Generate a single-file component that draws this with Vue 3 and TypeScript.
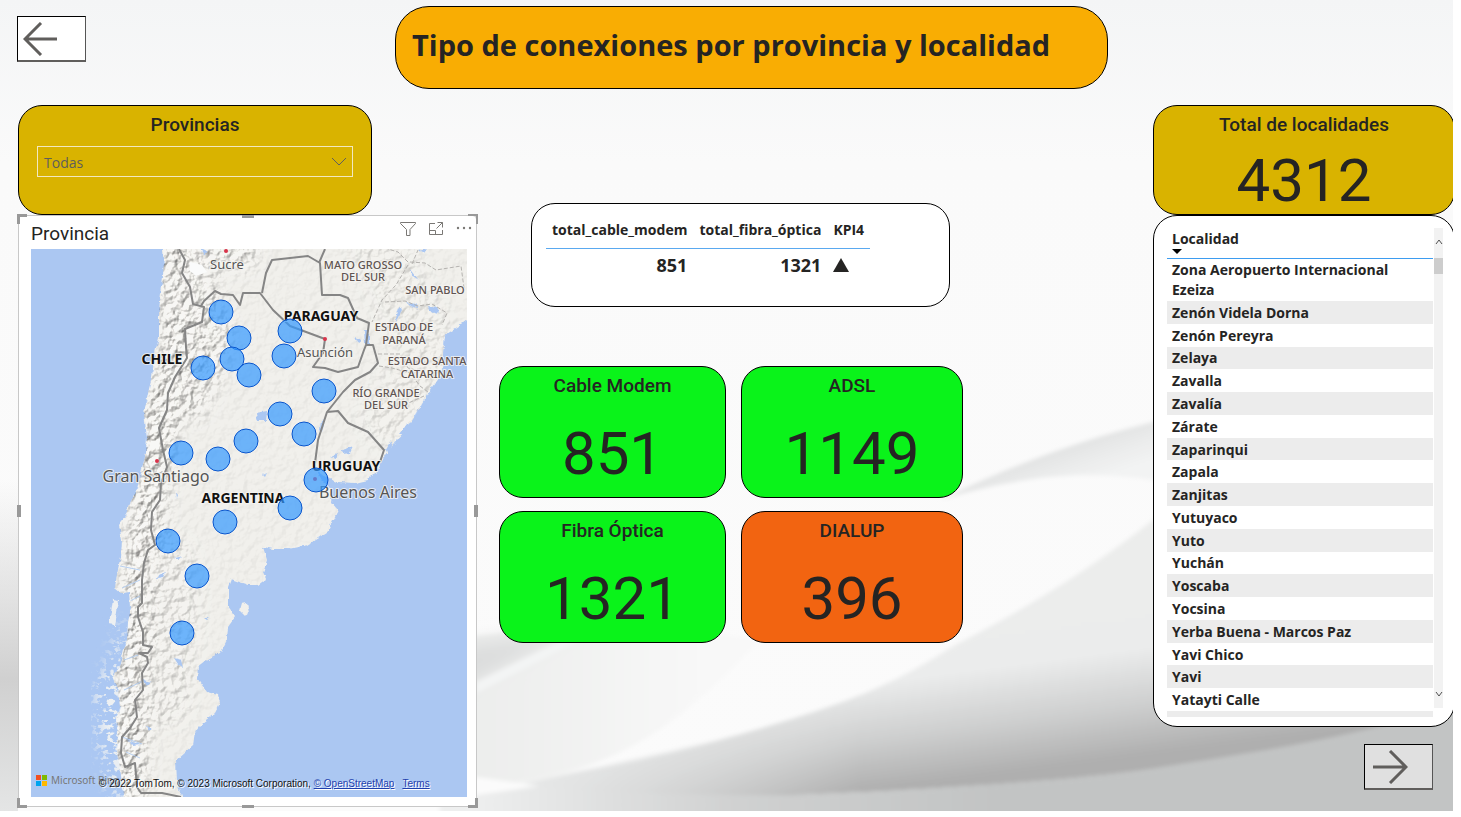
<script setup lang="ts">
import { ref } from 'vue'

interface Kpi { name: string; value: number; tone: 'good' | 'bad' }
interface MapLabel { text: string; x: number; y: number }

const provincia = ref('Todas')

const kpis: Kpi[] = [
  { name: 'Cable Modem', value: 851, tone: 'good' },
  { name: 'ADSL', value: 1149, tone: 'good' },
  { name: 'Fibra Óptica', value: 1321, tone: 'good' },
  { name: 'DIALUP', value: 396, tone: 'bad' },
]

const localidades: string[] = [
  'Zona Aeropuerto Internacional Ezeiza', 'Zenón Videla Dorna', 'Zenón Pereyra', 'Zelaya',
  'Zavalla', 'Zavalía', 'Zárate', 'Zaparinqui', 'Zapala', 'Zanjitas', 'Yutuyaco', 'Yuto',
  'Yuchán', 'Yoscaba', 'Yocsina', 'Yerba Buena - Marcos Paz', 'Yavi Chico', 'Yavi', 'Yatayti Calle',
]

const bubbles: [number, number][] = [
  [221, 312], [239, 338], [290, 331], [232, 359], [284, 356], [203, 368], [249, 375],
  [324, 391], [280, 414], [304, 434], [246, 441], [181, 453], [218, 459], [316, 480],
  [290, 508], [225, 522], [168, 541], [197, 576], [182, 633],
]

const countries: MapLabel[] = [
  { text: 'CHILE', x: 162, y: 364 },
  { text: 'PARAGUAY', x: 321, y: 321 },
  { text: 'URUGUAY', x: 346, y: 471 },
  { text: 'ARGENTINA', x: 243, y: 503 },
]
const states: MapLabel[] = [
  { text: 'MATO GROSSO', x: 363, y: 269 },
  { text: 'DEL SUR', x: 363, y: 281 },
  { text: 'SAN PABLO', x: 435, y: 294 },
  { text: 'ESTADO DE', x: 404, y: 331 },
  { text: 'PARANÁ', x: 404, y: 344 },
  { text: 'ESTADO SANTA', x: 427, y: 365 },
  { text: 'CATARINA', x: 427, y: 378 },
  { text: 'RÍO GRANDE', x: 386, y: 397 },
  { text: 'DEL SUR', x: 386, y: 409 },
]

const handles: string[] = ['tl', 'tr', 'bl', 'br', 't', 'b', 'l', 'r']
</script>

<template>
  <main class="report">
    <svg class="backdrop" viewBox="0 0 1453 811" preserveAspectRatio="none" aria-hidden="true">
      <defs>
        <linearGradient id="bgBase" x1="0" y1="0" x2="0" y2="1">
          <stop offset="0" stop-color="#f4f5f6" />
          <stop offset="0.2" stop-color="#fafafa" />
          <stop offset="1" stop-color="#fbfbfb" />
        </linearGradient>
        <linearGradient id="bgBand" x1="1050" y1="450" x2="1064" y2="490" gradientUnits="userSpaceOnUse">
          <stop offset="0" stop-color="#e1e2e2" />
          <stop offset="0.5" stop-color="#eaebeb" />
          <stop offset="1" stop-color="#f2f3f3" />
        </linearGradient>
        <linearGradient id="bgFold" x1="1140" y1="560" x2="1165" y2="752" gradientUnits="userSpaceOnUse">
          <stop offset="0" stop-color="#ecedec" />
          <stop offset="0.45" stop-color="#ebecec" />
          <stop offset="0.75" stop-color="#cdcece" />
          <stop offset="1" stop-color="#afafaf" />
        </linearGradient>
        <linearGradient id="bgFoldFade" x1="530" y1="0" x2="860" y2="0" gradientUnits="userSpaceOnUse">
          <stop offset="0" stop-color="#e6e7e7" stop-opacity="1" />
          <stop offset="1" stop-color="#e6e7e7" stop-opacity="0" />
        </linearGradient>
        <linearGradient id="bgFloor" x1="470" y1="0" x2="1000" y2="0" gradientUnits="userSpaceOnUse">
          <stop offset="0" stop-color="#eeefef" />
          <stop offset="0.5" stop-color="#d0d1d1" />
          <stop offset="1" stop-color="#c2c4c4" />
        </linearGradient>
        <linearGradient id="bgLeft" x1="0" y1="480" x2="0" y2="811" gradientUnits="userSpaceOnUse">
          <stop offset="0" stop-color="#d4d4d4" stop-opacity="0" />
          <stop offset="0.6" stop-color="#d0d0d0" />
          <stop offset="1" stop-color="#e4e5e5" />
        </linearGradient>
        <linearGradient id="bgLens" x1="470" y1="0" x2="700" y2="0" gradientUnits="userSpaceOnUse">
          <stop offset="0" stop-color="#ecedec" />
          <stop offset="1" stop-color="#f8f8f8" />
        </linearGradient>
        <filter id="soft" x="-5%" y="-5%" width="110%" height="110%"><feGaussianBlur stdDeviation="2" /></filter>
        <filter id="softer" x="-10%" y="-10%" width="120%" height="120%"><feGaussianBlur stdDeviation="9" /></filter>
      </defs>
      <rect width="1453" height="811" fill="url(#bgBase)" />
      <path d="M0 480H18V811H0Z" fill="url(#bgLeft)" />
      <g filter="url(#soft)">
        <path d="M940 500C1010 466 1080 440 1153 422C1260 390 1360 340 1470 270V480H1153C1080 470 1020 476 940 500Z" fill="url(#bgBand)" />
        <path d="M440 640L620 620L760 640C700 700 640 770 500 785H440Z" fill="url(#bgLens)" />
        <path d="M440 650L560 630L620 606L440 700Z" fill="#dcdddd" filter="url(#softer)" />
        <path d="M476 694L600 630L590 626L476 682Z" fill="#f3f4f4" />
        <path d="M1153 520C1090 570 1020 612 955 645C900 680 860 700 755 730C690 750 620 766 520 784C600 796 720 798 793 795C880 792 1080 782 1172 766C1260 752 1370 736 1470 700V440C1350 430 1250 450 1153 520Z" fill="url(#bgFold)" />
        <path d="M860 700C800 720 700 745 520 784C600 796 720 798 860 792Z" fill="url(#bgFoldFade)" />
        <path d="M440 776C520 784 600 796 793 795C880 792 1080 782 1172 766C1260 752 1370 736 1470 700V830H440Z" fill="url(#bgFloor)" />
        <path d="M470 776L540 786L470 796Z" fill="#fbfbfb" />
      </g>
    </svg>

    <header class="top">
      <button class="nav" type="button" aria-label="Página anterior">
        <svg viewBox="0 0 36 34"><path d="M34 17H2M18 1L2 17L18 33" /></svg>
      </button>
      <h1 class="title">Tipo de conexiones por provincia y localidad</h1>
    </header>

    <div class="columns">
      <section class="left">
        <div class="card gold slicer">
          <label class="caption" for="provincia">Provincias</label>
          <div class="picker">
            <select id="provincia" v-model="provincia">
              <option>Todas</option>
            </select>
            <svg viewBox="0 0 16 9" aria-hidden="true"><path d="M1 1L8 8L15 1" /></svg>
          </div>
        </div>

        <div class="map-card">
          <span v-for="h in handles" :key="h" class="handle" :class="h"></span>
          <div class="map-head">
            <h2>Provincia</h2>
            <div class="tools">
              <button type="button" aria-label="Filtros">
                <svg viewBox="0 0 16 16"><path d="M0.5 1.5H15.5V2.5L10 8.5V14.5H6.500V8.500L0.500 2.500Z" /></svg>
              </button>
              <button type="button" aria-label="Modo de enfoque">
                <svg viewBox="0 0 16 16"><path d="M7 2.500H1.500V13.500H14.500V9M9.500 1.500H14.500V6.500M14.500 1.500L8.500 7.500M1.500 9.500H7.500V13.500" /></svg>
              </button>
              <button type="button" aria-label="Más opciones">
                <svg viewBox="0 0 16 16"><g class="dots"><circle cx="2" cy="7" r="1.200" /><circle cx="8" cy="7" r="1.200" /><circle cx="14" cy="7" r="1.200" /></g></svg>
              </button>
            </div>
          </div>
          <div class="map">
            <svg viewBox="31 249 436 548" role="img" aria-label="Mapa de provincias">
              <defs>
                <path id="land" d="M162 240L164 260L163 277L159 310L159 337L155 353L152 377L148 393L144 413L147 437L146 453L141 473L137 490L129 505L125 517L119 525L122 540L121 557L117 573L115 588L121 593L130 592L131 607L128 623L127 640L124 650L120 667L112 676L118 690L120 707L116 720L118 733L117 753L120 767L122 783L125 800H183L177 783L176 760L185 752L193 745L195 733L202 723L215 713L220 703L218 695L207 692L197 678L198 667L207 660L220 653L227 640L228 627L235 617L228 607L228 587L231 579L248 585L258 585L266 579L263 572L267 560L263 547L272 549L288 549L308 545L327 533L333 520L338 510L331 502L332 490L320 478L317 470L327 478L338 482L355 483L368 480L378 470L385 455L397 440L408 427L417 413L422 403L432 387L442 373L443 353L445 335L458 327L475 314V240Z" />
                <clipPath id="landClip"><use href="#land" /></clipPath>
                <filter id="coast" x="0" y="0" width="100%" height="100%">
                  <feTurbulence type="fractalNoise" baseFrequency="0.15" numOctaves="3" seed="4" />
                  <feDisplacementMap in="SourceGraphic" scale="5" xChannelSelector="R" yChannelSelector="G" />
                </filter>
                <filter id="relief" x="0" y="0" width="100%" height="100%" color-interpolation-filters="sRGB">
                  <feTurbulence type="fractalNoise" baseFrequency="0.13" numOctaves="4" seed="9" />
                  <feColorMatrix values="0 0 0 0 0  0 0 0 0 0  0 0 0 0 0  1 0 0 0 0" />
                  <feDiffuseLighting surfaceScale="4" diffuseConstant="1.300" lighting-color="#f2f0ec">
                    <feDistantLight azimuth="225" elevation="50" />
                  </feDiffuseLighting>
                </filter>
                <filter id="fjords" x="0" y="0" width="100%" height="100%" color-interpolation-filters="sRGB">
                  <feTurbulence type="fractalNoise" baseFrequency="0.14 0.2" numOctaves="3" seed="22" />
                  <feColorMatrix values="0 0 0 0 0.94  0 0 0 0 0.95  0 0 0 0 0.95  9 0 0 0 -4.700" />
                </filter>
                <filter id="fade"><feGaussianBlur stdDeviation="8" /></filter>
                <mask id="mountains" maskUnits="userSpaceOnUse" x="31" y="249" width="436" height="548">
                  <rect x="31" y="249" width="436" height="548" fill="#0c0c0c" />
                  <g filter="url(#fade)" fill="none" stroke-linecap="round">
                    <path d="M178 240L180 350L158 430L144 540L136 640L126 797" stroke="#888" stroke-width="34" />
                    <path d="M190 270L215 340L190 400M220 250H240" stroke="#666" stroke-width="36" />
                    <path d="M380 250L430 350L390 420" stroke="#282828" stroke-width="60" />
                    <path d="M170 560L175 600L165 700" stroke="#383838" stroke-width="50" />
                  </g>
                </mask>
                <mask id="archipelago" maskUnits="userSpaceOnUse" x="31" y="249" width="436" height="548">
                  <path d="M122 620L110 660L95 688L98 740L112 800H130L126 700L130 620Z" fill="#fff" filter="url(#fade)" />
                </mask>
              </defs>
              <rect x="31" y="249" width="436" height="548" fill="#abc7f2" />
              <g filter="url(#coast)">
                <use href="#land" fill="#f1f0ec" />
                <path d="M242 604L247 603L249 613L244 615L240 611Z" fill="#f1f0ec" />
                <path d="M113 599L119 600L115 625L109 624Z" fill="#edf0f2" />
              </g>
              <g mask="url(#archipelago)"><rect x="31" y="249" width="436" height="548" filter="url(#fjords)" /></g>
              <g clip-path="url(#landClip)">
                <g mask="url(#mountains)"><rect x="31" y="249" width="436" height="548" filter="url(#relief)" /></g>
                <path d="M120 566L140 570M122 588L140 580M128 602L140 596M124 690L145 680M122 737L142 744M126 752L140 758M124 660L138 655" class="water" />
              </g>
              <g fill="#fafbfb"><path d="M190 262L202 265L207 272L196 276L189 270Z" /></g>
              <g fill="#abc7f2" filter="url(#coast)">
                <path d="M256 413L267 411L266 421L258 421Z" />
                <path d="M321 420L325 419L322 432L320 430Z" />
                <path d="M342 450L353 447L350 453L343 454ZM330 456L337 453L335 458Z" />
                <path d="M364 330L369 330L369 345L365 344ZM355 337L362 340L358 343Z" />
                <path d="M399 434L407 424L413 421L404 434ZM386 450L391 441L392 446L388 455Z" />
                <path d="M394 325L402 310L399 308ZM409 268L415 276L419 280L411 275ZM407 302L415 304L419 309L411 306ZM428 306L441 309L436 314L430 311ZM418 250L428 248L424 253Z" />
                <path d="M158 576L166 572L163 578L157 579ZM174 558L182 556L178 560ZM174 658L182 660L184 668L178 664ZM143 680L152 682L145 685ZM127 740L141 745L133 746ZM146 726L152 729L148 731ZM204 618L210 618L207 620ZM263 475L267 473L265 477Z" />
                <path d="M200 248L208 252L204 254ZM176 493L178 496L177 499Z" />
              </g>
              <path class="state" d="M408 265L396 285L382 300L372 322M408 262L398 252L388 249M410 262L425 263L436 270L461 266L464 288M385 302L405 301L418 306L432 304L447 313L442 325M378 354H400L408 368L424 372M379 366L392 368L410 373L420 386L428 392M404 405L424 396M412 264L418 250" />
              <g class="border">
                <path d="M179 249L185 260L182 273L190 287L193 304L204 307L202 322L185 329L186 347L187 358L175 377L168 393L167 410L159 428L163 450L167 467L161 483L160 500L152 512L151 530L155 545L148 550L144 563L142 580L142 603L138 607L138 617L143 632L143 645L152 647L148 653L139 653L147 657L148 663L142 673L143 690L135 700L137 717L130 728L122 737L121 753L125 767L135 763L137 787L141 793H162L181 797" />
                <path d="M201 306L204 301L215 291L221 294L233 295L240 305L243 293H260L273 310L290 326L325 339L323 353L313 367L325 368L338 372L358 367L364 350L366 345L369 323L357 318L348 298L340 295L322 295L320 263L308 256L272 260L266 273L262 293M325 249L319 263" />
                <path d="M366 345L373 345L378 363L370 372L355 380L343 392L327 412L318 440L315 463M327 412L338 411L348 423L368 432L384 450L380 462" />
              </g>
              <g class="city-dots">
                <circle cx="226" cy="251" r="2" /><circle cx="325" cy="339" r="2" />
                <circle cx="157" cy="461" r="2" /><circle cx="315" cy="479" r="2" />
              </g>
              <g class="label cities">
                <text x="227" y="269" class="small">Sucre</text>
                <text x="325" y="357" class="small">Asunción</text>
                <text x="156" y="482">Gran Santiago</text>
                <text x="368" y="498">Buenos Aires</text>
              </g>
              <g class="label states"><text v-for="(s, i) in states" :key="i" :x="s.x" :y="s.y">{{ s.text }}</text></g>
              <g class="label countries"><text v-for="c in countries" :key="c.text" :x="c.x" :y="c.y">{{ c.text }}</text></g>
              <g class="bubbles"><circle v-for="(b, i) in bubbles" :key="i" :cx="b[0]" :cy="b[1]" r="12" /></g>
            </svg>
            <div class="bing">
              <svg viewBox="0 0 11 11" aria-hidden="true">
                <path fill="#f25022" d="M0 0H5V5H0Z" /><path fill="#7fba00" d="M6 0H11V5H6Z" />
                <path fill="#00a4ef" d="M0 6H5V11H0Z" /><path fill="#ffb900" d="M6 6H11V11H6Z" />
              </svg>
              <span>Microsoft Bing</span>
            </div>
            <p class="credits">© 2022 TomTom, © 2023 Microsoft Corporation, <a href="#osm">© OpenStreetMap</a><a class="terms" href="#terms">Terms</a></p>
          </div>
        </div>
      </section>

      <section class="middle">
        <div class="card kpi-card">
          <table>
            <thead>
              <tr><th>total_cable_modem</th><th>total_fibra_óptica</th><th>KPI4</th></tr>
            </thead>
            <tbody>
              <tr>
                <td>851</td><td>1321</td>
                <td><svg viewBox="0 0 16 14" role="img" aria-label="En alza"><path d="M8 0L16 14H0Z" /></svg></td>
              </tr>
            </tbody>
          </table>
        </div>
        <div class="tiles">
          <article v-for="k in kpis" :key="k.name" class="card tile" :class="k.tone">
            <h2 class="caption">{{ k.name }}</h2>
            <p class="figure">{{ k.value }}</p>
          </article>
        </div>
      </section>

      <section class="right">
        <article class="card gold total">
          <h2 class="caption">Total de localidades</h2>
          <p class="figure">4312</p>
        </article>
        <div class="card list">
          <div class="viewport">
            <table>
              <thead>
                <tr><th>Localidad<svg viewBox="0 0 10 5" aria-hidden="true"><path d="M0 0H10L5 5Z" /></svg></th></tr>
              </thead>
              <tbody>
                <tr v-for="l in localidades" :key="l"><td>{{ l }}</td></tr>
                <tr><td></td></tr>
              </tbody>
            </table>
          </div>
          <div class="scrollbar">
            <button type="button" aria-label="Subir"><svg viewBox="0 0 8 6"><path d="M1 5L4 1L7 5" /></svg></button>
            <span class="thumb"></span>
            <button type="button" aria-label="Bajar"><svg viewBox="0 0 8 6"><path d="M1 1L4 5L7 1" /></svg></button>
          </div>
        </div>
        <button class="nav next" type="button" aria-label="Página siguiente">
          <svg viewBox="0 0 36 34"><path d="M1 17H34M18 1L34 17L18 33" /></svg>
        </button>
      </section>
    </div>
  </main>
</template>

<style>
body { margin: 0; background: #fff; }
</style>

<style scoped>
.report {
  position: relative;
  overflow: hidden;
  box-sizing: border-box;
  min-height: calc(100vh - 6px);
  margin: 0 8px 6px 0;
  color: #252423;
  font-family: "Open Sans", "Noto Sans", sans-serif;
}
.report * { box-sizing: border-box; }
.backdrop { position: absolute; inset: 0; width: 100%; height: 100%; }
h1, h2, p { margin: 0; }
button { padding: 0; border: 0; background: none; font: inherit; }
svg { display: block; }

.top { position: relative; display: flex; align-items: flex-start; padding: 6px 345px 0 17px; }
.nav { width: 69px; height: 46px; margin-top: 10px; padding-left: 5px; border: 1px solid #000; border-right-color: #555; border-bottom: 2px solid #605e5c; background: #fff; flex: none; }
.nav svg { width: 36px; height: 34px; fill: none; stroke: #605e5c; stroke-width: 3; }
.title {
  flex: 1;
  height: 83px;
  margin-left: 309px;
  padding-left: 16px;
  border: 1px solid #000;
  border-radius: 34px;
  background: #f9ad03;
  font-size: 29px;
  font-weight: 700;
  line-height: 76px;
  white-space: nowrap;
}

.columns { position: relative; display: grid; grid-template-columns: 459px minmax(486px, 1fr) 302px; margin: 16px -2px 0 18px; align-items: start; }
.card { border: 1px solid #000; border-radius: 24px; background: #fff; }
.gold { height: 110px; background: #d9b300; }
.caption { display: block; font: 500 19px/24px Roboto, sans-serif; text-align: center; }
.figure { font: 400 60px/60px Roboto, sans-serif; text-align: center; }

.slicer { width: 354px; padding: 7px 18px; }
.picker { position: relative; margin-top: 9px; }
.picker select {
  appearance: none;
  width: 100%;
  height: 31px;
  padding: 3px 6px 0;
  border: 1px solid #f2e8c0;
  border-radius: 0;
  background: transparent;
  color: #605e5c;
  font: 400 14px/20px "Open Sans", sans-serif;
}
.picker svg { position: absolute; right: 6px; top: 11px; width: 16px; height: 9px; fill: none; stroke: #605e5c; pointer-events: none; }

.map-card { position: relative; padding: 0 9px 9px 12px; border: 1px solid #c8c8c8; border-radius: 4px; background: #fff; }
.map-head { display: flex; justify-content: space-between; height: 33px; }
.map-head h2 { font: 400 19px/36px Roboto, sans-serif; }
.tools { display: flex; gap: 12px; margin: 5px -5px 0 0; height: 16px; }
.tools svg { width: 16px; height: 16px; fill: none; stroke: #7a7875; }
.tools .dots { fill: #7a7875; stroke: none; }
.map { position: relative; }
.map > svg { width: 100%; height: auto; }
.border { fill: none; stroke: #858585; stroke-width: 2; stroke-linejoin: round; }
.state { fill: none; stroke: #b5b3b0; stroke-width: 1; stroke-dasharray: 4 2; }
.water { fill: none; stroke: #b8d0f0; stroke-width: 1; }
.city-dots { fill: #d8334a; }
.label { text-anchor: middle; font-family: "Noto Sans", sans-serif; paint-order: stroke; stroke: #f6f5f2; stroke-width: 2; stroke-linejoin: round; stroke-opacity: 0.8; }
.cities { fill: #555; font-size: 16px; }
.cities .small { font-size: 13px; }
.states { fill: #5f5452; font-size: 11px; font-weight: 500; }
.countries { fill: #111; font-size: 14px; font-weight: 700; }
.bubbles { fill: #3399ff; fill-opacity: 0.7; stroke: #0a55cc; stroke-width: 1; }
.bing { position: absolute; left: 5px; bottom: 9px; display: flex; align-items: center; gap: 4px; color: #777; font: 10px/16px "Noto Sans", sans-serif; }
.bing svg { width: 11px; height: 11px; }
.credits { position: absolute; left: 68px; bottom: 5px; color: #111; font: 10px/16px "Liberation Sans", sans-serif; white-space: nowrap; text-shadow: 1px 1px 0 #fff; }
.credits a { color: #1f3fae; }
.terms { margin-left: 8px; }

.handle { position: absolute; border: 0 solid #999; }
.tl, .tr, .bl, .br { width: 10px; height: 10px; }
.tl { left: -2px; top: -2px; border-width: 3px 0 0 3px; }
.tr { right: -2px; top: -2px; border-width: 2px 2px 0 0; }
.bl { left: -2px; bottom: -2px; border-width: 0 0 3px 3px; }
.br { right: -2px; bottom: -2px; border-width: 0 3px 3px 0; }
.t, .b { left: 50%; width: 12px; margin-left: -6px; border-top-width: 3px; }
.l, .r { top: 50%; height: 12px; margin-top: -6px; border-left-width: 4px; }
.t { top: -1px; } .b { bottom: -2px; } .l { left: -2px; } .r { right: -2px; }

.middle { padding: 98px 0 0 22px; }
.kpi-card { width: 419px; height: 104px; margin-left: 32px; padding: 10px 0 0 14px; }
.kpi-card table { border-collapse: collapse; }
.kpi-card th { height: 34px; padding: 0 6px 3px; border-bottom: 1px solid #5aa9f0; font-size: 14px; font-weight: 700; text-align: left; }
.kpi-card td { height: 34px; padding: 0 6px; font-size: 18px; font-weight: 700; line-height: 24px; text-align: right; }
.kpi-card td svg { width: 16px; height: 14px; fill: #252423; }
.tiles { display: grid; grid-template-columns: 227fr 222fr; gap: 13px 15px; width: 464px; margin-top: 59px; }
.tile { height: 132px; padding-top: 7px; }
.tile .figure { margin-top: 26px; }
.good { background: #0af31a; }
.bad { background: #f26411; }

.total { padding-top: 7px; }
.total .figure { margin-top: 14px; }
.list { display: flex; height: 512px; padding: 12px 0 9px 13px; }
.viewport { width: 266px; height: 489px; overflow: hidden; }
.list table { width: 100%; height: 506px; border-collapse: collapse; font-size: 14px; line-height: 20px; text-align: left; }
.list th { height: 30px; padding: 0 5px 4px; border-bottom: 1px solid #3d9cf0; font-weight: 700; line-height: 20px; vertical-align: bottom; }
.list th svg { width: 10px; height: 5px; }
.list td { height: 22px; padding: 1px 5px 0; font-weight: 700; }
.list tbody tr:nth-child(even) { background: #ececec; }
.scrollbar { display: flex; flex-direction: column; align-items: center; width: 9px; height: 480px; margin-left: 1px; padding: 11px 0; background: #f2f2f2; }
.scrollbar svg { width: 8px; height: 6px; fill: none; stroke: #505050; }
.thumb { width: 9px; height: 16px; margin: 13px 0 auto; background: #cdcdcd; }
.next { display: block; margin: 17px 0 0 211px; padding-left: 7px; background: #e0e0e0; }
</style>
